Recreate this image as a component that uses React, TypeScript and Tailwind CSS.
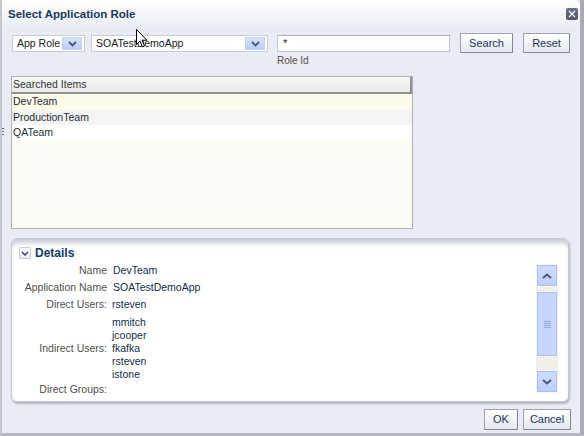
import React from 'react';

const font = { fontFamily: '"Liberation Sans", Arial, sans-serif' };

function DropButton() {
  return (
    <div className="shrink-0 w-[20px] h-[13px] mr-[2px] flex items-center justify-center bg-gradient-to-b from-[#d6e2fb] to-[#b9cdf6] border border-[#c3d3f3]">
      <svg width="9" height="6" viewBox="0 0 9 6">
        <path d="M1 1 L4.5 4.5 L8 1" fill="none" stroke="#3f5a86" strokeWidth="1.8" />
      </svg>
    </div>
  );
}

function Select({ label, width }: { label: string; width: string }) {
  return (
    <div className={`${width} h-[17px] mt-[2px] flex items-center justify-between bg-white border border-[#c9ccd3] pl-[4px]`}>
      <span className="text-[10.5px] text-[#222] leading-none whitespace-nowrap">{label}</span>
      <DropButton />
    </div>
  );
}

function Btn({ label, width, height }: { label: string; width: string; height: string }) {
  return (
    <button
      className={`${width} ${height} flex items-center justify-center text-[11px] text-[#1d3454] bg-gradient-to-b from-[#ffffff] to-[#e3e7ef] border border-[#9aa1b0] border-b-[#7d8597] border-r-[#7d8597] rounded-[1px]`}
    >
      {label}
    </button>
  );
}

function ScrollBtn({ up }: { up?: boolean }) {
  return (
    <div className="w-[22px] h-[23px] flex items-center justify-center border border-[#f4f7fe] outline outline-1 outline-[#a9c0ef] -outline-offset-2 bg-gradient-to-b from-[#cfdcfb] to-[#bccffa]">
      <svg width="10" height="6" viewBox="0 0 10 6">
        <path d={up ? 'M1 5 L5 1.5 L9 5' : 'M1 1 L5 4.5 L9 1'} fill="none" stroke="#4b5878" strokeWidth="2" />
      </svg>
    </div>
  );
}

export default function App() {
  const users = ['mmitch', 'jcooper', 'fkafka', 'rsteven', 'istone'];
  return (
    <div
      style={font}
      className="relative w-[584px] h-[436px] overflow-hidden flex flex-col bg-[#e9ecf4] border-l-2 border-l-[#c4c7ce] border-r-[4px] border-r-[#a9abb1] border-b-[3px] border-b-[#b3b6bd]"
    >
      {/* Titulo */}
      <div className="h-[29px] flex items-center justify-between pl-[6px] pr-[2px] bg-gradient-to-b from-[#ffffff] to-[#e9ecf4] rounded-tr-[6px]">
        <span className="text-[11.5px] font-bold text-[#17395b]">Select Application Role</span>
        <div className="w-[12px] h-[12px] mt-[-1px] flex items-center justify-center rounded-[2px] bg-gradient-to-b from-[#6b7388] to-[#4e566a]">
          <svg width="8" height="8" viewBox="0 0 8 8">
            <path d="M1 1 L7 7 M7 1 L1 7" stroke="#ffffff" strokeWidth="1.3" />
          </svg>
        </div>
      </div>

      {/* Busca */}
      <div className="flex items-start pl-[10px] mt-[4px]">
        <Select label="App Role" width="w-[73px]" />
        <div className="ml-[6px]">
          <Select label="SOATestDemoApp" width="w-[177px]" />
        </div>
        <div className="ml-[9px] flex flex-col">
          <div className="w-[173px] h-[17px] mt-[2px] bg-white border border-[#c3c6cd] border-t-[#a9acb3] pl-[5px] flex items-center">
            <span className="text-[11px] text-[#222] leading-none">*</span>
          </div>
          <span className="mt-[2px] h-[13px] leading-[13px] text-[10px] text-[#5b4c3c]">Role Id</span>
        </div>
        <div className="ml-[10px]">
          <Btn label="Search" width="w-[53px]" height="h-[20px]" />
        </div>
        <div className="ml-[10px]">
          <Btn label="Reset" width="w-[47px]" height="h-[20px]" />
        </div>
      </div>

      {/* Tabela */}
      <div className="ml-[9px] mt-[9px] w-[402px] h-[153px] flex flex-col border border-[#b0b2b7] bg-[#fcfdf7] text-[10.5px] text-[#1e2b3a]">
        <div className="h-[17px] flex items-center pl-[1px] bg-gradient-to-b from-[#f9f9fa] to-[#e9e9ec] border-b-2 border-b-[#8f9196] border-r-2 border-r-[#8f9196]">
          <span className="text-[#333]">Searched Items</span>
        </div>
        <div className="h-[16px] flex items-center pl-[1px] bg-[#fffbe9]">DevTeam</div>
        <div className="h-[15px] flex items-center pl-[1px] bg-[#f4f4f4]">ProductionTeam</div>
        <div className="h-[15px] flex items-center pl-[1px] bg-white">QATeam</div>
      </div>

      {/* Detalhes */}
      <div className="ml-[9px] mt-[9px] w-[558px] h-[164px] rounded-[6px] bg-white border border-[#c6c9d1] shadow-[inset_0_6px_5px_-2px_rgba(150,158,180,0.55),1px_2px_2px_rgba(110,115,130,0.45)] overflow-hidden">
        <div className="flex items-center pl-[7px] pt-[8px] h-[20px]">
          <div className="w-[12px] h-[12px] flex items-center justify-center border border-[#c9ccd6] bg-gradient-to-b from-white to-[#e8ebf2] rounded-[1px]">
            <svg width="8" height="5" viewBox="0 0 8 5">
              <path d="M1 1 L4 4 L7 1" fill="none" stroke="#2b3b58" strokeWidth="1.4" />
            </svg>
          </div>
          <span className="ml-[4px] text-[12px] font-bold text-[#103a5e]">Details</span>
        </div>
        <div className="h-[134px] flex justify-between pr-[10px]">
          <div className="grid grid-cols-[95px_1fr] gap-x-[6px] content-start mt-[3px] text-[10.5px]">
            <span className="h-[17px] leading-[17px] text-right text-[#4f4f4f]">Name</span>
            <span className="h-[17px] leading-[17px] text-[#142d4a]">DevTeam</span>
            <span className="h-[17px] leading-[17px] text-right text-[#4f4f4f]">Application Name</span>
            <span className="h-[17px] leading-[17px] text-[#142d4a]">SOATestDemoApp</span>
            <span className="h-[17px] leading-[17px] text-right text-[#4f4f4f]">Direct Users:</span>
            <span className="h-[17px] leading-[17px] text-[#142d4a] -ml-[1px]">rsteven</span>
            <span className="self-center pt-[3px] text-right text-[#4f4f4f]">Indirect Users:</span>
            <div className="flex flex-col pt-[3px] -ml-[1px]">
              {users.map((u) => (
                <span key={u} className="h-[13px] leading-[13px] text-[#142d4a]">
                  {u}
                </span>
              ))}
            </div>
            <span className="h-[17px] leading-[17px] text-right text-[#4f4f4f]">Direct Groups:</span>
            <span className="h-[17px]" />
          </div>
          <div className="w-[22px] mt-[5px] flex flex-col bg-[#f1efe6]">
            <ScrollBtn up />
            <div className="mt-[4px] h-[66px] flex items-center justify-center border border-[#f4f7fe] outline outline-1 outline-[#a9c0ef] -outline-offset-2 bg-gradient-to-r from-[#c4d4fb] to-[#c9d8fc]">
              <div className="flex flex-col gap-[1px]">
                <div className="w-[7px] h-[1px] bg-[#8ea9e6]" />
                <div className="w-[7px] h-[1px] bg-[#8ea9e6]" />
                <div className="w-[7px] h-[1px] bg-[#8ea9e6]" />
                <div className="w-[7px] h-[1px] bg-[#8ea9e6]" />
              </div>
            </div>
            <div className="h-[13px]" />
            <ScrollBtn />
          </div>
        </div>
      </div>

      {/* Rodape */}
      <div className="flex justify-end gap-[5px] pr-[9px] mt-[7px]">
        <Btn label="OK" width="w-[34px]" height="h-[21px]" />
        <Btn label="Cancel" width="w-[48px]" height="h-[21px]" />
      </div>

      {/* divisor lateral */}
      <div className="absolute left-0 top-[128px] flex flex-col gap-[2px]">
        <div className="w-[2px] h-[1px] bg-[#6d7280]" />
        <div className="w-[2px] h-[1px] bg-[#6d7280]" />
        <div className="w-[2px] h-[1px] bg-[#6d7280]" />
      </div>

      {/* cursor */}
      <svg className="absolute left-[134px] top-[29px]" width="12" height="19" viewBox="0 0 12 19">
        <path d="M0.5 0.5 L0.5 15.5 L4 12 L6.5 18 L8.5 17 L6 11.2 L11 11.2 Z" fill="#ffffff" stroke="#000000" strokeWidth="1" />
      </svg>
    </div>
  );
}
